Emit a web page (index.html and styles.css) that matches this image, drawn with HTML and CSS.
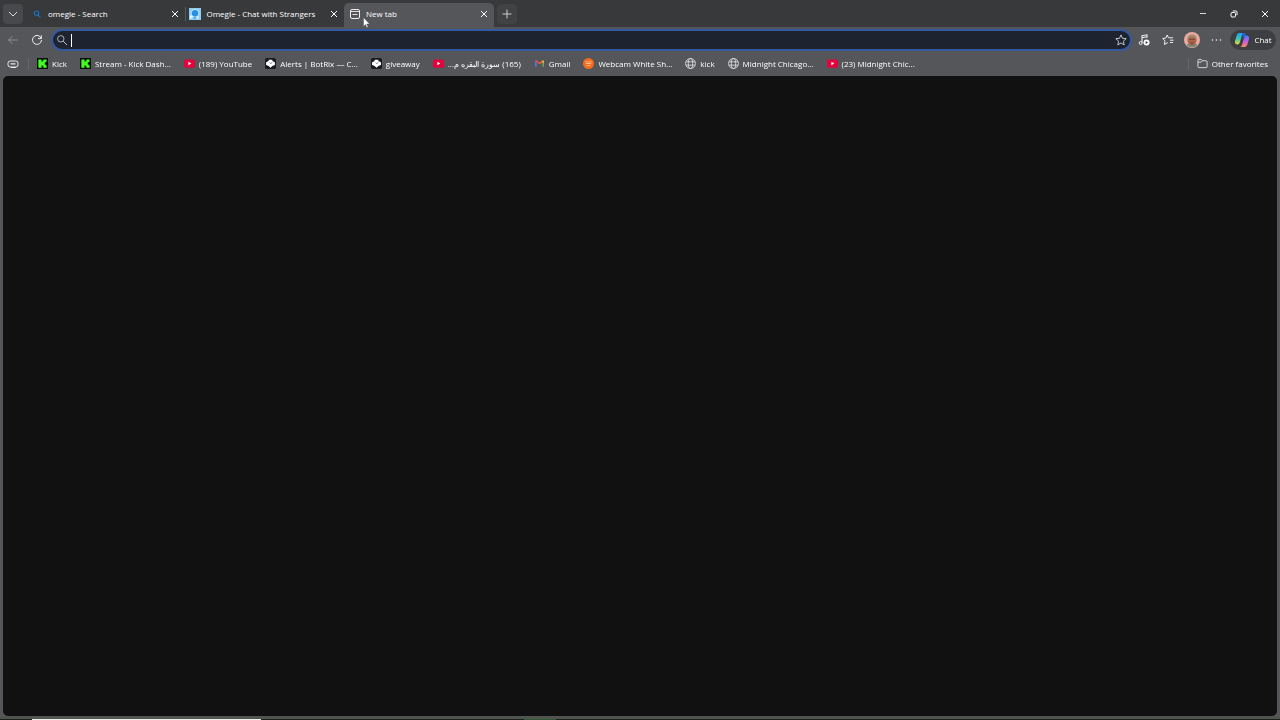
FILE: index.html
```html
<!DOCTYPE html>
<html lang="en">
<head>
    <meta charset="UTF-8">
    <meta name="viewport" content="width=device-width, initial-scale=1.0">
    <title>New tab</title>
    <link rel="stylesheet" href="styles.css">
</head>
<body>
    <svg class="defs" aria-hidden="true">
        <defs>
            <symbol id="close" viewBox="0 0 8 8"><path d="M1 1L7 7M7 1L1 7" stroke="#fff" fill="none"/></symbol>
            <symbol id="kick" viewBox="0 0 12 12"><path fill="#080d08" d="M0 0h12v12H0z"/><path fill="#43fc24" d="M1.500 1.500h3.500v2.500h1V3h1V1.500h3.500V4H9.500v1h-1v2h1v1h1v2.500H7V9H6V8H5v2.500H1.500z"/></symbol>
            <symbol id="youtube" viewBox="0 0 12 12"><rect y="1.500" width="12" height="9" rx="2" fill="#e6003c"/><path fill="#fff" d="M4.800 4L8 6 4.800 8z"/></symbol>
            <symbol id="botrix" viewBox="0 0 12 12"><rect width="12" height="12" rx="2" fill="#181a20"/><path fill="#fff" d="M4 2h4v1.200l2.800 1.300v3L8 8.800 6 10.500 4 8.800 1.200 7.500v-3L4 3.200z"/><path d="M5 5l1 1 2-1" stroke="#555" stroke-width=".8" fill="none"/></symbol>
            <symbol id="globe" viewBox="0 0 12 12"><g fill="none" stroke="#e8e8e8" stroke-width=".9"><circle cx="6" cy="6" r="5.4"/><ellipse cx="6" cy="6" rx="2.4" ry="5.4"/><path d="M1.2 4.2h9.6M1.2 7.8h9.6"/></g></symbol>
        </defs>
    </svg>

    <header class="tab-strip">
        <button class="tab-menu" aria-label="Tab actions"><svg width="10" height="10" viewBox="0 0 10 10"><path d="M1 3l4 4 4-4" stroke="#ddd" fill="none"/></svg></button>
        <div class="tabs">
            <div class="tab">
                <svg class="favicon" viewBox="0 0 12 12"><circle cx="5.5" cy="5.2" r="2.2" stroke="#1673be" stroke-width="1.2" fill="none"/><path d="M7 7l2.4 2.4" stroke="#1673be" stroke-width="1.3"/></svg>
                <span class="title">omegle - Search</span>
                <button class="close" aria-label="Close tab"><svg width="8" height="8"><use href="#close"/></svg></button>
            </div>
            <div class="tab divided">
                <svg class="favicon" viewBox="0 0 12 12"><path fill="#8fcdf5" d="M0 0h12v12H0z"/><circle cx="6" cy="5.3" r="3.900" fill="#2590e6" stroke="#e9f6ff" stroke-width=".8"/><path d="M1 8l2-1 1 2-3 2zM6 10l4-2-1 3z" fill="#e9f6ff"/><path d="M4 9.500L6 11l2-1.500z" fill="#2590e6"/></svg>
                <span class="title">Omegle - Chat with Strangers</span>
                <button class="close" aria-label="Close tab"><svg width="8" height="8"><use href="#close"/></svg></button>
            </div>
            <div class="tab active">
                <svg class="favicon" viewBox="0 0 12 12"><rect x="1.500" y="1.500" width="9" height="9" rx="1.500" stroke="#eee" fill="none"/><path d="M2 3.500h8M3.500 6.500h5" stroke="#ddd" fill="none"/></svg>
                <span class="title">New tab</span>
                <button class="close" aria-label="Close tab"><svg width="8" height="8"><use href="#close"/></svg></button>
                <svg class="pointer" width="7" height="11" viewBox="0 0 7 11"><path d="M.5 .5v9l2-2 1.300 3 1.300-.6L3.800 7h2.800z" fill="#fff" stroke="#444" stroke-width=".4"/></svg>
            </div>
        </div>
        <button class="new-tab" aria-label="New tab"><svg width="10" height="10" viewBox="0 0 10 10"><path d="M5 .5v9M.5 5h9" stroke="#ccc"/></svg></button>
        <div class="window-buttons">
            <button aria-label="Minimize"><svg width="8" height="8" viewBox="0 0 8 8"><path d="M1 3.500h6" stroke="#ddd"/></svg></button>
            <button aria-label="Restore"><svg width="8" height="8" viewBox="0 0 8 8"><g fill="none" stroke="#fff"><rect x="1" y="2.5" width="4.5" height="4.5" rx="1"/><path d="M2.8 1H6q1 0 1 1v3.2"/></g></svg></button>
            <button aria-label="Close"><svg width="8" height="8"><use href="#close"/></svg></button>
        </div>
    </header>

    <div class="toolbar">
        <button class="tool" aria-label="Back"><svg width="12" height="12" viewBox="0 0 12 12"><path d="M11 6H1.5M5.5 2l-4 4 4 4" stroke="#8a8b8e" fill="none"/></svg></button>
        <button class="tool" aria-label="Refresh"><svg width="12" height="12" viewBox="0 0 12 12"><path d="M10.3 4.6A4.5 4.5 0 1 0 10.5 6M10.3 1.3v3.3H7" stroke="#eee" fill="none"/></svg></button>
        <div class="address">
            <svg width="12" height="12" viewBox="0 0 12 12"><circle cx="4.8" cy="4.8" r="3.2" stroke="#bbc0c8" stroke-width=".9" fill="none"/><path d="M7.2 7.2L11 11" stroke="#bbc0c8"/></svg>
            <input type="text" aria-label="Search or enter web address" autofocus>
            <button aria-label="Add to favorites"><svg width="12" height="12" viewBox="0 0 12 12"><path d="M6 .9l1.5 3.4 3.7.4-2.8 2.5.8 3.7L6 9 2.8 10.9l.8-3.7L.8 4.7l3.7-.4z" stroke="#d0d3d9" stroke-width=".9" fill="none"/></svg></button>
        </div>
        <div class="tools">
            <button class="tool" aria-label="Media controls"><svg width="12" height="12" viewBox="0 0 12 12"><path d="M4 8.5V1.8l5-1v3M4 3.8l5-1" stroke="#eee" stroke-width="1.1" fill="none"/><circle cx="2.7" cy="9" r="1.5" fill="none" stroke="#eee"/><circle cx="8.5" cy="8.500" r="3" fill="#fff"/><path d="M7.700 7l2.300 1.500L7.700 10z" fill="#333"/></svg></button>
            <button class="tool" aria-label="Favorites"><svg width="12" height="12" viewBox="0 0 12 12"><path d="M6.8 3.8H11M8 6.2h3.5M8 8.5h3M6.5 3.8L5.2 1 3.8 4l-3.1.5L3 6.8l-.6 3.7 3.4-1.9" stroke="#eee" fill="none"/></svg></button>
            <button class="tool" aria-label="Profile"><svg width="16" height="16" viewBox="0 0 16 16"><circle cx="8" cy="8" r="8" fill="#e9aaa2"/><path d="M2.5 13q2-2.5 5.5-2.5t5.5 2.5A8 8 0 0 1 2.5 13z" fill="#71877c"/><ellipse cx="8" cy="8" rx="4.500" ry="5.2" fill="#a86549"/><path d="M3.500 7q0-4.500 4.500-4.500T12.500 7q-2-2-4.500-2T3.500 7z" fill="#a08a70"/><path d="M5.5 7.5h2m1 0h2M6.5 11h3" stroke="#5f3b32" stroke-width=".9"/></svg></button>
            <button class="tool" aria-label="Settings and more"><svg width="12" height="12" viewBox="0 0 12 12"><g fill="#eee"><circle cx="2.500" cy="6" r=".8"/><circle cx="6.500" cy="6" r=".8"/><circle cx="10.500" cy="6" r=".8"/></g></svg></button>
        </div>
        <button class="chat">
            <svg width="16" height="16" viewBox="0 0 16 16">
                <defs>
                    <linearGradient id="cool" x2="0" y2="1"><stop stop-color="#279cff"/><stop offset=".5" stop-color="#32c7b0"/><stop offset="1" stop-color="#f4d32c"/></linearGradient>
                    <linearGradient id="warm" x2="0" y2="1"><stop stop-color="#4f78ff"/><stop offset=".5" stop-color="#c45be8"/><stop offset="1" stop-color="#ff8b56"/></linearGradient>
                </defs>
                <path fill="url(#cool)" d="M5 1h5q-1.500 0-2.200 2.500L6 10q-.8 2.500-2.500 2.500Q.5 12.500 1 9l1.500-5Q3.200 1 5 1z"/>
                <path fill="url(#warm)" d="M11 15H6q1.500 0 2.200-2.500L10 6q.8-2.500 2.500-2.500Q15.500 3.500 15 7l-1.500 5Q12.800 15 11 15z"/>
                <path fill="#1d6ae0" d="M8 1h2q1.500 0 2.200 2.500Q10.500 3.500 10 6L9 5z"/>
            </svg>
            Chat
        </button>
    </div>

    <nav class="favorites">
        <button class="tool" aria-label="Workspaces"><svg width="12" height="12" viewBox="0 0 12 12"><rect x="1" y="3" width="10" height="6" rx="2.200" stroke="#e6e6e6" fill="none"/><path d="M3.500 5.800h5M4 9.500h5" stroke="#e6e6e6" stroke-width="1.200"/></svg></button>
        <span class="separator"></span>
        <div class="links">
            <a href="#"><svg><use href="#kick"/></svg>Kick</a>
            <a href="#"><svg><use href="#kick"/></svg>Stream - Kick Dash...</a>
            <a href="#"><svg><use href="#youtube"/></svg>(189) YouTube</a>
            <a href="#"><svg><use href="#botrix"/></svg>Alerts | BotRix — C...</a>
            <a href="#"><svg><use href="#botrix"/></svg>giveaway</a>
            <a href="#"><svg><use href="#youtube"/></svg><span dir="rtl">(165) سورة البقره م...</span></a>
            <a href="#"><svg viewBox="0 0 12 12"><path d="M2 9.500V3" stroke="#4f7dde" stroke-width="1.800"/><path d="M2 3l4 3.200" stroke="#e34a57" stroke-width="1.800"/><path d="M6 6.200L10 3" stroke="#ed6537" stroke-width="1.800"/><path d="M10 9.500V3" stroke="#65a94f" stroke-width="1.800"/><path d="M9.100 3h1.800v2H9.100z" fill="#f3bd32"/></svg>Gmail</a>
            <a href="#"><svg viewBox="0 0 12 12"><circle cx="6" cy="6" r="6" fill="#f36b1c"/><path d="M2.500 4.200h7M3 6h6M4 8q2 1 4 0" stroke="#ffc18d" fill="none"/></svg>Webcam White Sh...</a>
            <a href="#"><svg><use href="#globe"/></svg>kick</a>
            <a href="#"><svg><use href="#globe"/></svg>Midnight Chicago...</a>
            <a href="#"><svg><use href="#youtube"/></svg>(23) Midnight Chic...</a>
        </div>
        <span class="separator"></span>
        <a class="other" href="#"><svg viewBox="0 0 12 12"><path d="M1 3V9.500q0 1 1 1h8q1 0 1-1V4q0-1-1-1H6L4.700 1.500H2Q1 1.500 1 3zM1 4.500h3.500L6 3" stroke="#eee" stroke-width=".9" fill="none"/></svg>Other favorites</a>
    </nav>

    <main class="page"></main>
    <footer class="taskbar"><span class="preview"></span><span class="running"></span></footer>
</body>
</html>
```
FILE: styles.css
```css
* {
    box-sizing: border-box;
}

body {
    display: flex;
    flex-direction: column;
    height: 100vh;
    margin: 0;
    overflow: hidden;
    background-color: #55565a;
    color: #fff;
    font-family: "Open Sans", "Noto Sans", sans-serif;
    font-size: 8px;
    line-height: 12px;
}

button, input {
    padding: 0;
    border: none;
    background: none;
    color: inherit;
    font: inherit;
}

button {
    display: flex;
    align-items: center;
    justify-content: center;
}

a {
    color: inherit;
    text-decoration: none;
}

svg {
    display: block;
    flex: none;
}

.defs {
    position: absolute;
    width: 0;
    height: 0;
}

.tab-strip {
    display: flex;
    align-items: center;
    height: 27px;
    padding-left: 3px;
    background-color: #38393b;
}

.tab-menu, .new-tab {
    width: 20px;
    height: 20px;
    border-radius: 4px;
    background-color: #48494c;
}

.tabs {
    display: flex;
    align-self: stretch;
    flex: 0 1 471px;
    min-width: 0;
    padding: 3px 0 0 4px;
}

.tab {
    position: relative;
    display: flex;
    flex: 159;
    align-items: center;
    gap: 5px;
    min-width: 0;
    padding: 0 6px 3px 4px;
}

.tab.active {
    flex: 149;
    padding-left: 5px;
    border-radius: 5px 5px 0 0;
    background-color: #55565a;
}

.divided::before {
    position: absolute;
    left: 0;
    top: 4px;
    width: 1px;
    height: 14px;
    background-color: #58595b;
    content: "";
}

.favicon {
    width: 12px;
    height: 12px;
}

.title {
    flex: 1;
    overflow: hidden;
    white-space: nowrap;
}

.pointer {
    position: absolute;
    left: 19px;
    top: 14px;
}

.new-tab {
    margin-left: 3px;
    background-color: #414244;
}

.window-buttons {
    display: flex;
    margin-left: auto;
}

.window-buttons button {
    width: 31px;
    height: 26px;
}

.toolbar {
    display: flex;
    align-items: center;
    height: 26px;
    padding: 0 4px 0 1px;
}

.tool {
    width: 24px;
    height: 20px;
}

.address {
    display: flex;
    flex: 1;
    align-items: center;
    height: 22px;
    margin-left: 2px;
    padding: 0 3px;
    border: 2px solid #34599f;
    border-radius: 11px;
    background-color: #1e2330;
}

.address input {
    flex: 1;
    min-width: 0;
    height: 14px;
    margin-left: 3px;
    outline: none;
    background: linear-gradient(#fff, #fff) left center / 1px 13px no-repeat;
    caret-color: transparent;
    font-size: 10px;
}

.tools {
    display: flex;
    margin-right: 2px;
}

.chat {
    gap: 4px;
    width: 46px;
    height: 20px;
    border-radius: 10px;
    background-color: #3d3e41;
}

.favorites {
    display: flex;
    align-items: center;
    height: 23px;
    padding: 0 12px 2px 1px;
}

.separator {
    width: 1px;
    height: 12px;
    margin: 0 8px 0 3px;
    background-color: #66676b;
}

.links {
    display: flex;
    flex: 1;
    gap: 13px;
    min-width: 0;
    overflow: hidden;
}

.favorites a {
    display: flex;
    align-items: center;
    gap: 4px;
    white-space: nowrap;
}

.favorites a svg {
    width: 11px;
    height: 11px;
}

.page {
    flex: 1;
    margin: 0 3px;
    border-radius: 5px;
    background-color: #111;
}

.taskbar {
    display: flex;
    height: 4px;
    padding-left: 32px;
    border-top: 3px solid #50554f;
    background-color: #1c211d;
}

.preview {
    width: 229px;
    background-color: #eee;
}

.running {
    width: 32px;
    margin-left: 263px;
    background-color: #2f5a34;
}
```
